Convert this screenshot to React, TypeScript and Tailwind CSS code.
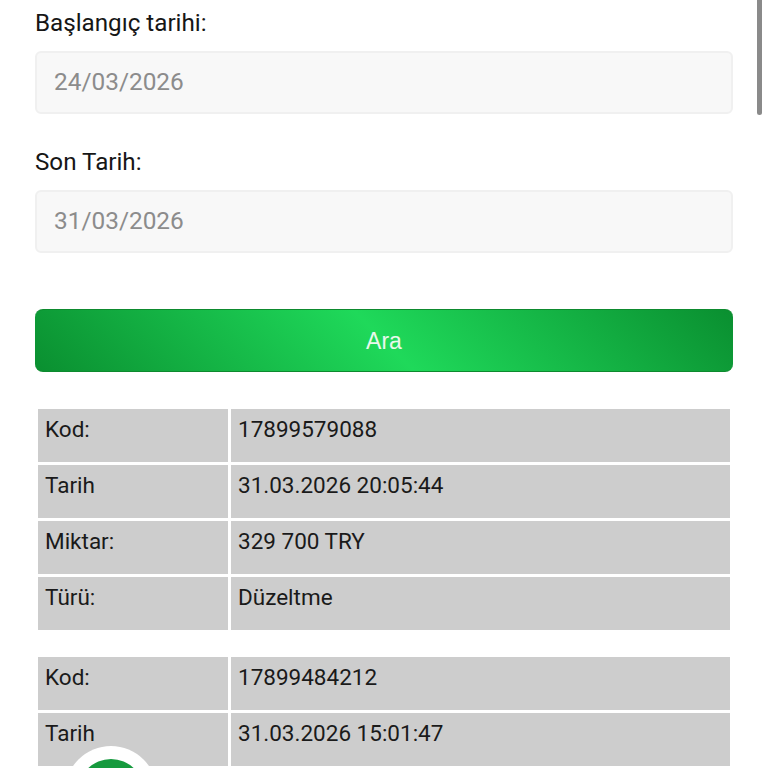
import React from 'react';

type Row = { label: string; value: string };

const tables: Row[][] = [
  [
    { label: 'Kod:', value: '17899579088' },
    { label: 'Tarih', value: '31.03.2026 20:05:44' },
    { label: 'Miktar:', value: '329 700 TRY' },
    { label: 'Türü:', value: 'Düzeltme' },
  ],
  [
    { label: 'Kod:', value: '17899484212' },
    { label: 'Tarih', value: '31.03.2026 15:01:47' },
  ],
];

const DateField = ({ label, value }: { label: string; value: string }) => (
  <div className="flex flex-col">
    <label className="h-[28px] text-[24.2px] leading-[26px] text-[#161616]">{label}</label>
    <div className="mt-[13px] flex h-[63px] items-center rounded-[6px] border-2 border-[#f0f0f0] bg-[#f8f8f8] pl-[17px] text-[24.4px] text-[#8c8c8c]">
      {value}
    </div>
  </div>
);

const InfoTable = ({ rows }: { rows: Row[] }) => (
  <div className="mx-[3px] flex flex-col gap-[3px]">
    {rows.map(row => (
      <div key={row.label} className="flex h-[53px] shrink-0 gap-[3px] text-[22.5px] leading-[26px] text-[#1a1a1a]">
        <div className="w-[190px] bg-[#cdcdcd] pl-[7px] pt-[7px]">{row.label}</div>
        <div className="flex-1 bg-[#cdcdcd] pl-[7px] pt-[7px]">{row.value}</div>
      </div>
    ))}
  </div>
);

export default function App() {
  return (
    <div className="relative h-[768px] w-[768px] overflow-hidden bg-white font-['Roboto',sans-serif]">
      <div className="flex w-[733px] flex-col pl-[35px] pt-[10px]">
        <DateField label="Başlangıç tarihi:" value="24/03/2026" />
        <div className="mt-[35px]">
          <DateField label="Son Tarih:" value="31/03/2026" />
        </div>
        <button className="mt-[56px] flex h-[63px] items-center justify-center rounded-[8px] border-y border-y-[#0d8a2e] bg-[linear-gradient(45deg,#0a8f30_0%,#1fd95a_50%,#0a8f30_100%)] pt-[1px] font-['Liberation_Sans',sans-serif] text-[23px] text-[#e9f8ec]">
          Ara
        </button>
        <div className="mt-[37px] flex flex-col gap-[27px]">
          {tables.map((rows, i) => (
            <InfoTable key={i} rows={rows} />
          ))}
        </div>
      </div>

      {/* scrollbar */}
      <div className="absolute right-[6px] top-0 h-[115px] w-[5px] rounded-b-full bg-[#8a8a8a]" />

      {/* floating button, cut off by the page bottom */}
      <div className="absolute left-[65px] top-[746px] flex h-[92px] w-[92px] items-center justify-center rounded-full bg-white">
        <div className="h-[66px] w-[66px] rounded-full bg-[#169a3e]" />
      </div>
    </div>
  );
}
